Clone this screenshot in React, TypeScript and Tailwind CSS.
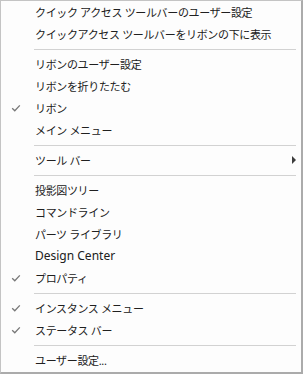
type Item = { label: string; checked?: boolean; submenu?: boolean; latin?: boolean } | 'sep'

const items: Item[] = [
  { label: 'クイック アクセス ツールバーのユーザー設定' },
  { label: 'クイックアクセス ツールバーをリボンの下に表示' },
  'sep',
  { label: 'リボンのユーザー設定' },
  { label: 'リボンを折りたたむ' },
  { label: 'リボン', checked: true },
  { label: 'メイン メニュー' },
  'sep',
  { label: 'ツール バー', submenu: true },
  'sep',
  { label: '投影図ツリー' },
  { label: 'コマンドライン' },
  { label: 'パーツ ライブラリ' },
  { label: 'Design Center', latin: true },
  { label: 'プロパティ', checked: true },
  'sep',
  { label: 'インスタンス メニュー', checked: true },
  { label: 'ステータス バー', checked: true },
  'sep',
  { label: 'ユーザー設定...' },
]

function Check() {
  return (
    <svg width="10" height="8" viewBox="0 0 10 8" className="text-[#777]">
      <path d="M1.2 4.2 L3.8 6.8 L8.8 1.4" fill="none" stroke="currentColor" strokeWidth="1.3" />
    </svg>
  )
}

export default function App() {
  return (
    <div
      className="w-[303px] h-[374px] bg-[#fdfdfd] border-l border-t border-l-[#c4c4c4] border-t-[#c4c4c4] border-r-2 border-b-2 border-r-[#ababab] border-b-[#ababab] text-[#202020] flex flex-col"
      style={{ fontFamily: '"Noto Sans", "Noto Sans CJK JP", sans-serif' }}
    >
      {items.map((item, i) =>
        item === 'sep' ? (
          <div key={i} className="h-[8px] pl-[33px] pr-[5px] pt-[4px]">
            <div className="h-px bg-[#d2d2d2]" />
          </div>
        ) : (
          <div key={i} className="h-[22px] flex items-center">
            <div className="w-[34px] flex justify-center pr-[5px]">{item.checked && <Check />}</div>
            <span
              className={
                item.latin ? 'text-[12px] leading-none' : 'text-[11px] leading-none tracking-[-0.35px]'
              }
            >
              {item.label}
            </span>
            {item.submenu && (
              <div className="ml-auto mr-[5px] w-0 h-0 border-y-[4px] border-y-transparent border-l-[4px] border-l-[#3c3c3c]" />
            )}
          </div>
        )
      )}
    </div>
  )
}
